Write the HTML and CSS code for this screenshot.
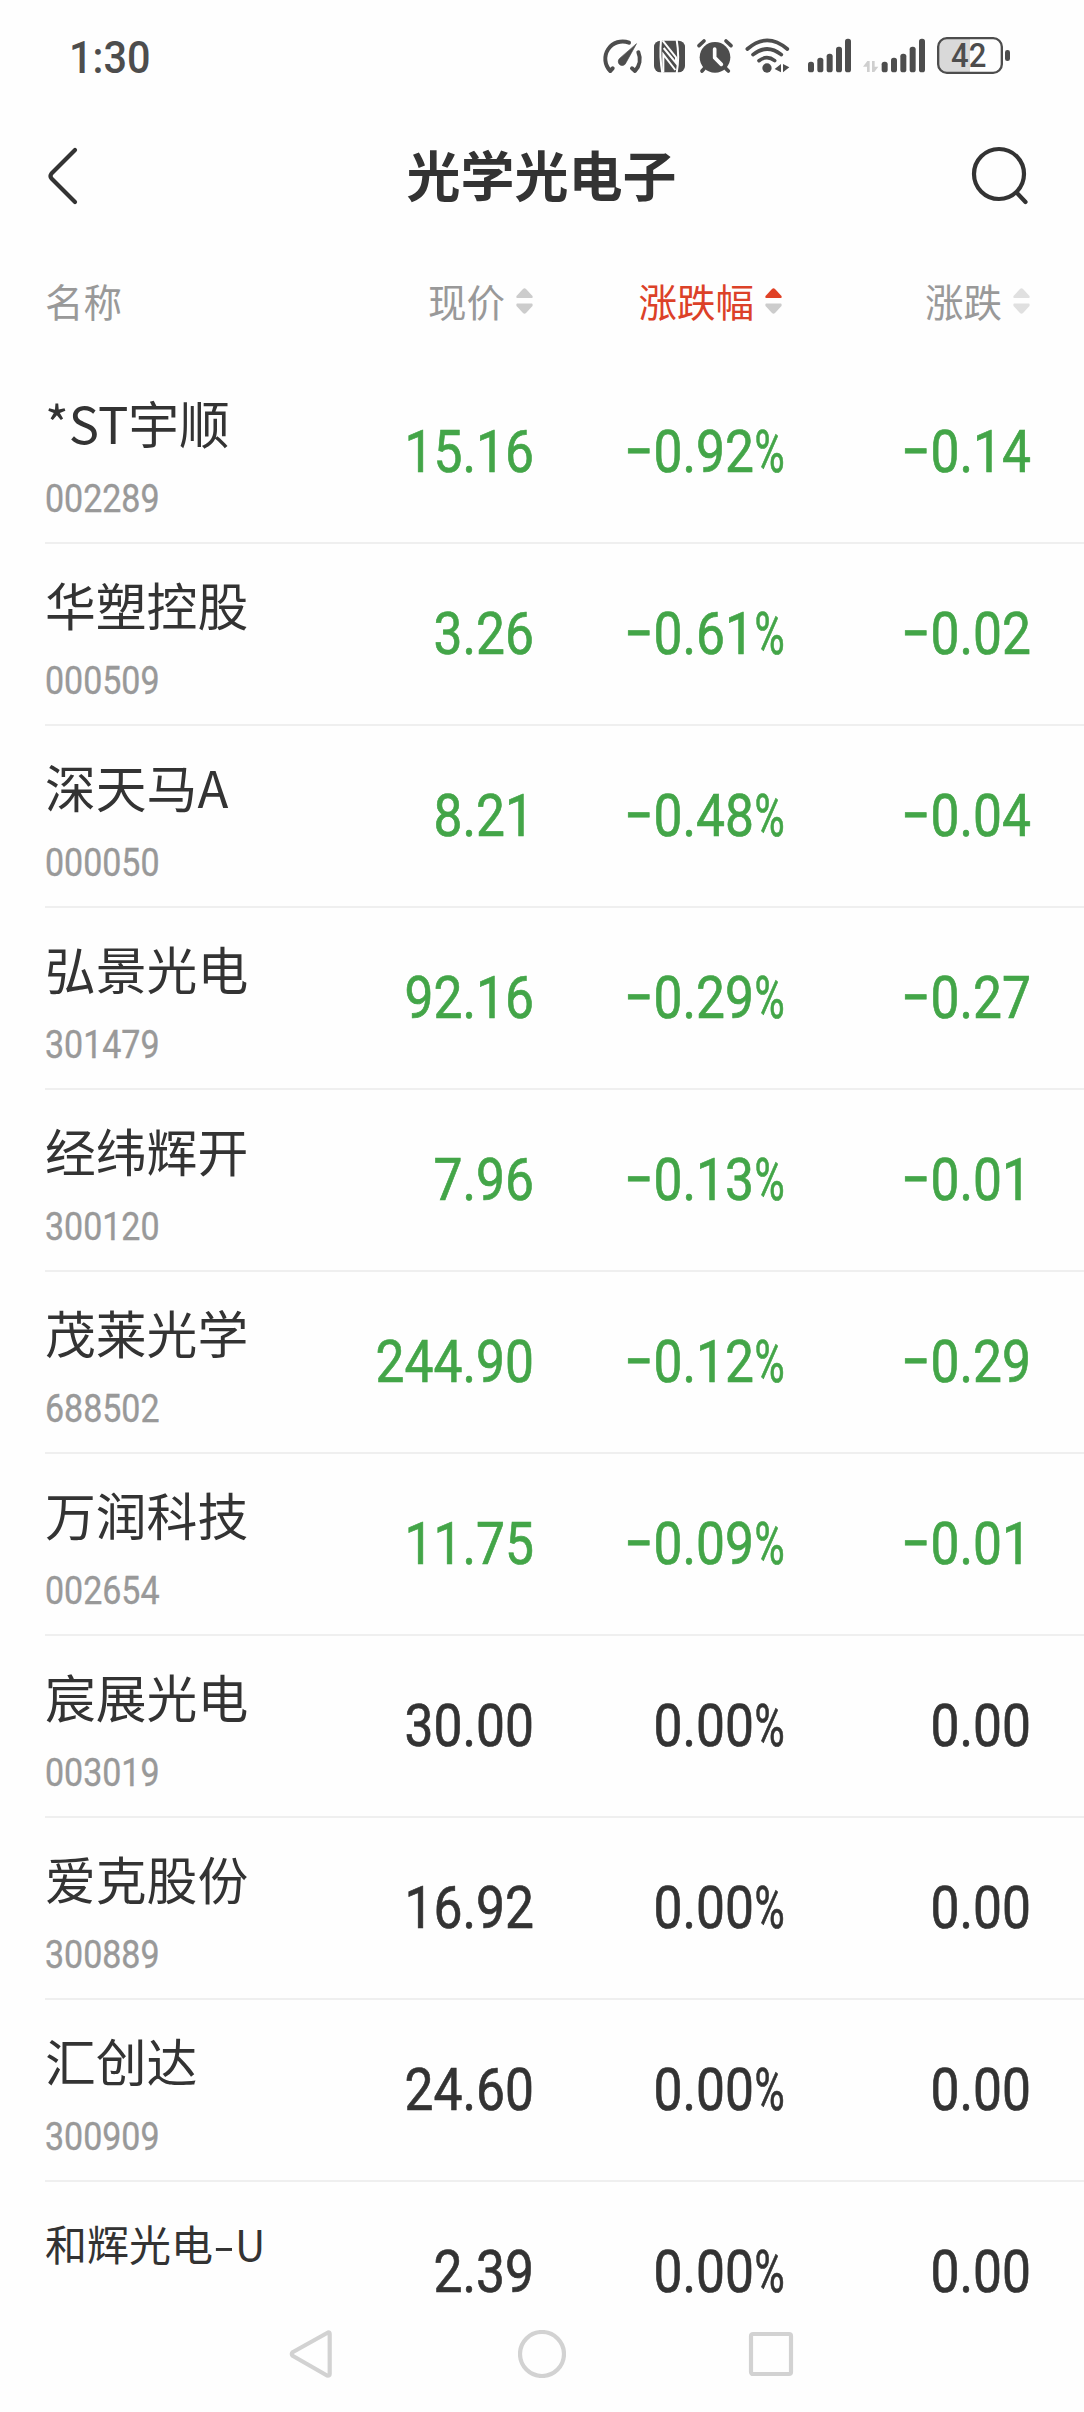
FILE: index.html
```html
<!DOCTYPE html>
<html lang="zh-CN">
<head>
<meta charset="utf-8">
<title>光学光电子</title>
<link rel="stylesheet" href="styles.css">
</head>
<body>
<div class="status">
  <span class="clock">1:30</span>
  <div class="status-icons">
    <svg width="41" height="36" viewBox="66 54 123 108" fill="none" stroke="#4d4d4d" stroke-width="12" stroke-linecap="round" stroke-linejoin="round"><path d="M147 68A52 52 0 0 0 91 153L98 145M175 97A52 52 0 0 1 165 153L156 145"/><path d="M169 72L138 128A12 12 0 1 1 118 116Z" fill="#4d4d4d" stroke-width="2"/></svg>
    <svg class="gap-10" width="33" height="36" viewBox="219 54 99 108"><rect x="222" y="62" width="93" height="95" rx="19" fill="#4d4d4d"/><path d="M243 60Q238 110 247 159M290 60Q299 110 290 159" fill="none" stroke="#fefefe" stroke-width="6"/><path d="M251 84L288 129V112L248 62M250 157V103L286 150" fill="none" stroke="#fefefe" stroke-width="6"/></svg>
    <svg class="gap-10" width="38" height="36" viewBox="348 54 114 108" fill="none" stroke-linecap="round"><circle cx="405" cy="112" r="46" fill="#4d4d4d"/><path d="M357 77L372 63M453 77L438 63M373 145L366 153M437 145L445 153" stroke="#4d4d4d" stroke-width="11"/><path d="M404 87V113L424 133" stroke="#fefefe" stroke-width="11" stroke-linejoin="round"/></svg>
    <svg class="gap-11" width="45" height="36" viewBox="495 54 135 108" fill="none" stroke="#4d4d4d" stroke-width="11" stroke-linecap="round"><path d="M502 87Q561 35 622 87M519 104Q561 70 604 104M537 122Q561 104 584 122"/><circle cx="561" cy="144" r="14" fill="#4d4d4d" stroke="none"/><path d="M603 132V157L584 147ZM609 157V132L628 142Z" fill="#4d4d4d" stroke="none"/></svg>
    <svg class="gap-17" width="45" height="36" viewBox="21 54 135 108" fill="#4d4d4d"><rect x="24" y="125" width="18" height="32" rx="8"/><rect x="52" y="113" width="18" height="44" rx="8"/><rect x="80" y="101" width="18" height="56" rx="8"/><rect x="108" y="80" width="18" height="77" rx="8"/><rect x="135" y="56" width="18" height="101" rx="8"/></svg>
    <svg class="gap-10" width="64" height="36" viewBox="186 54 192 108" fill="#4d4d4d"><path d="M189 140L202 123H209V156H201V140ZM216 123H224V140H235L223 156H216Z" fill="#cfcfcf"/><rect x="245" y="125" width="18" height="32" rx="8"/><rect x="273" y="113" width="18" height="44" rx="8"/><rect x="301" y="101" width="18" height="56" rx="8"/><rect x="329" y="80" width="18" height="77" rx="8"/><rect x="357" y="56" width="18" height="101" rx="8"/></svg>
    <svg class="gap-10" width="75" height="39" viewBox="408 48 225 117"><path d="M510 55H439Q415 55 415 79V133Q415 157 439 157H510Z" fill="#d9d9d9"/><rect x="414.500" y="54.500" width="191" height="104" rx="26" fill="none" stroke="#4d4d4d" stroke-width="7"/><rect x="615" y="90" width="15" height="33" rx="7" fill="#4d4d4d"/><text class="battery-text" x="453" y="141" textLength="106" lengthAdjust="spacingAndGlyphs">42</text></svg>
  </div>
</div>
<header class="titlebar">
  <svg width="34" height="60" viewBox="45 146 34 60" fill="none" stroke="#333" stroke-width="4.200" stroke-linecap="round" stroke-linejoin="round"><path d="M75 150L51.500 173.500Q49.500 176 51.500 178.500L75 202"/></svg>
  <h1>光学光电子</h1>
  <svg width="60" height="60" viewBox="970 145 60 60" fill="none" stroke="#333" stroke-width="4.200" stroke-linecap="round"><circle cx="999" cy="173" r="25"/><path d="M1017 192L1025.500 201"/></svg>
</header>
<div class="cols heads">
  <span>名称</span>
  <span class="head">现价<svg class="sort" width="17" height="26" viewBox="0 0 17 26"><path class="up" d="M7 1Q8.500-.5 10 1L16.500 8Q17 9.500 16 10H1Q0 9.500.5 8Z"/><path class="down" d="M7 25Q8.500 26.500 10 25L16.500 18Q17 16 16 15.500H1Q0 16 .5 18Z"/></svg></span>
  <span class="head active">涨跌幅<svg class="sort" width="17" height="26" viewBox="0 0 17 26"><path class="up" d="M7 1Q8.500-.5 10 1L16.500 8Q17 9.500 16 10H1Q0 9.500.5 8Z"/><path class="down" d="M7 25Q8.500 26.500 10 25L16.500 18Q17 16 16 15.500H1Q0 16 .5 18Z"/></svg></span>
  <span class="head faded">涨跌<svg class="sort" width="17" height="26" viewBox="0 0 17 26"><path class="up" d="M7 1Q8.500-.5 10 1L16.500 8Q17 9.500 16 10H1Q0 9.500.5 8Z"/><path class="down" d="M7 25Q8.500 26.500 10 25L16.500 18Q17 16 16 15.500H1Q0 16 .5 18Z"/></svg></span>
</div>
<main class="list">
  <div class="cols row fall"><div class="stock"><div class="name">*ST宇顺</div><div class="code">002289</div></div><div class="num">15.16</div><div class="num">−0.92<span class="pct">%</span></div><div class="num">−0.14</div></div>
  <div class="cols row fall"><div class="stock"><div class="name">华塑控股</div><div class="code">000509</div></div><div class="num">3.26</div><div class="num">−0.61<span class="pct">%</span></div><div class="num">−0.02</div></div>
  <div class="cols row fall"><div class="stock"><div class="name">深天马A</div><div class="code">000050</div></div><div class="num">8.21</div><div class="num">−0.48<span class="pct">%</span></div><div class="num">−0.04</div></div>
  <div class="cols row fall"><div class="stock"><div class="name">弘景光电</div><div class="code">301479</div></div><div class="num">92.16</div><div class="num">−0.29<span class="pct">%</span></div><div class="num">−0.27</div></div>
  <div class="cols row fall"><div class="stock"><div class="name">经纬辉开</div><div class="code">300120</div></div><div class="num">7.96</div><div class="num">−0.13<span class="pct">%</span></div><div class="num">−0.01</div></div>
  <div class="cols row fall"><div class="stock"><div class="name">茂莱光学</div><div class="code">688502</div></div><div class="num">244.90</div><div class="num">−0.12<span class="pct">%</span></div><div class="num">−0.29</div></div>
  <div class="cols row fall"><div class="stock"><div class="name">万润科技</div><div class="code">002654</div></div><div class="num">11.75</div><div class="num">−0.09<span class="pct">%</span></div><div class="num">−0.01</div></div>
  <div class="cols row"><div class="stock"><div class="name">宸展光电</div><div class="code">003019</div></div><div class="num">30.00</div><div class="num">0.00<span class="pct">%</span></div><div class="num">0.00</div></div>
  <div class="cols row"><div class="stock"><div class="name">爱克股份</div><div class="code">300889</div></div><div class="num">16.92</div><div class="num">0.00<span class="pct">%</span></div><div class="num">0.00</div></div>
  <div class="cols row"><div class="stock"><div class="name">汇创达</div><div class="code">300909</div></div><div class="num">24.60</div><div class="num">0.00<span class="pct">%</span></div><div class="num">0.00</div></div>
  <div class="cols row last"><div class="stock"><div class="name small">和辉光电<span class="dash">-</span>U</div></div><div class="num">2.39</div><div class="num">0.00<span class="pct">%</span></div><div class="num">0.00</div></div>
</main>
<nav class="navbar">
  <svg width="48" height="52" viewBox="288 2328 48 52"><path d="M328 2332.500Q329.700 2332 329.700 2334V2374Q329.700 2376 327 2375.500L293 2356Q290.500 2354 293 2352Z"/></svg>
  <svg width="48" height="48" viewBox="0 0 48 48"><circle cx="24" cy="24" r="22"/></svg>
  <svg width="48" height="48" viewBox="0 0 48 48"><rect x="3" y="4" width="40" height="40" rx="2"/></svg>
</nav>
</body>
</html>
```
FILE: styles.css
```css
* { box-sizing: border-box; }

body {
  margin: 0;
  width: 1084px;
  height: 2412px;
  overflow: hidden;
  display: flex;
  flex-direction: column;
  background: #fefefe;
  color: #333;
  font-family: "Noto Sans CJK SC", sans-serif;
}

svg { display: block; flex: none; }

.status {
  height: 114px;
  padding: 36px 73px 0 69px;
  display: flex;
  justify-content: space-between;
  align-items: flex-start;
}

.clock {
  padding-top: 1px;
  font: 500 45px/42px Roboto, sans-serif;
  color: #4d4d4d;
  transform: scaleX(.92);
  transform-origin: 0 50%;
}

.status-icons { display: flex; align-items: center; }
.gap-10 { margin-left: 10px; }
.gap-11 { margin-left: 11px; }
.gap-17 { margin-left: 17px; }

.battery-text { font: 500 98px Roboto, sans-serif; fill: #4d4d4d; }

.titlebar {
  height: 124px;
  padding: 0 54px 0 45px;
  display: flex;
  justify-content: space-between;
  align-items: center;
}

.titlebar h1 {
  margin: 0 0 4px 34px;
  font-size: 54px;
  line-height: 60px;
  font-weight: 700;
}

.cols {
  display: grid;
  grid-template-columns: 240px 249px 249px 248px;
  margin-left: 45px;
}

.heads {
  height: 124px;
  align-items: center;
  font-size: 38.5px;
  line-height: 44px;
  color: #999;
}

.head { display: flex; justify-content: flex-end; align-items: center; gap: 11px; padding-right: 1px; }
.sort { margin-top: 2px; }
.active { color: #dc4128; }
.up, .down { fill: #ccc; }
.active .up { fill: #e04126; }
.faded .up, .faded .down { fill: #e0e0e0; }

.list { height: 1946px; overflow: hidden; }

.row {
  height: 182px;
  border-bottom: 2px solid #efefef;
}

.last { height: 126px; border-bottom: 0; }

.stock { padding-top: 32px; }
.name { font-size: 50.8px; line-height: 56px; white-space: nowrap; }
.small { font-size: 42px; padding-top: 1px; }
.dash { display: inline-block; width: 22px; transform: scaleX(1.5); transform-origin: 0 50%; }

.code {
  margin-top: 27px;
  font: 400 39.5px/44px Roboto, sans-serif;
  color: #999;
  -webkit-text-stroke: .4px currentColor;
  transform: scaleX(.86);
  transform-origin: 0 50%;
}

.num {
  padding-top: 55px;
  font: 400 59.5px/70px Roboto, sans-serif;
  white-space: nowrap;
  display: flex;
  justify-content: flex-end;
  -webkit-text-stroke: .7px currentColor;
  transform: scaleX(.866);
  transform-origin: 100% 50%;
}

.fall .num { color: #43a548; }

.pct {
  width: 33.5px;
  transform: scaleX(.8);
  transform-origin: 0 50%;
}

.navbar {
  height: 104px;
  padding-bottom: 12px;
  display: flex;
  justify-content: center;
  align-items: center;
  gap: 182px;
}

.navbar svg { fill: none; stroke: #d2d2d2; stroke-width: 4.2; stroke-linejoin: round; }
```
